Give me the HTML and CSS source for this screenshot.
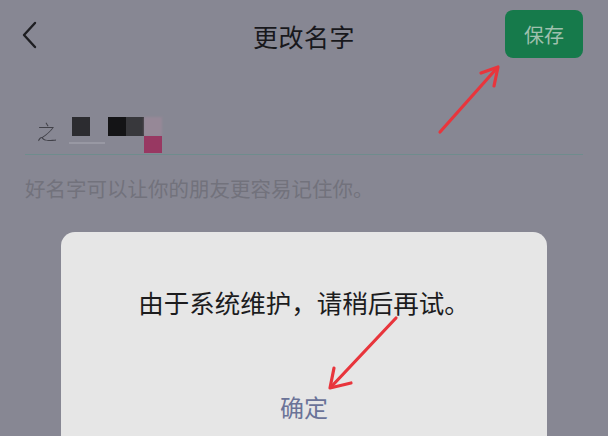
FILE: index.html
```html
<!DOCTYPE html>
<html lang="zh">
<head>
<meta charset="utf-8">
<link rel="stylesheet" href="styles.css">
</head>
<body>
<div class="screen">
  <header class="topbar">
    <div class="back">
      <svg width="18" height="28" viewBox="0 0 18 28"><path d="M15 2 L4 14 L15 26" fill="none" stroke="#1e1e22" stroke-width="2.4" stroke-linecap="round" stroke-linejoin="round"/></svg>
    </div>
    <h1 class="title">更改名字</h1>
    <div class="actions"><button class="save">保存</button></div>
  </header>

  <section class="field">
    <div class="name">
      <span class="glyph">之</span>
      <span class="px px1"></span>
      <span class="px px2"></span>
      <span class="px px3"></span>
      <span class="px px4"></span>
      <span class="px px5"></span>
      <span class="strokes"></span>
    </div>
  </section>
  <p class="hint">好名字可以让你的朋友更容易记住你。</p>

  <div class="dialog">
    <p class="msg">由于系统维护，请稍后再试。</p>
    <div class="ok">确定</div>
  </div>

  <svg class="arrows" width="608" height="436" viewBox="0 0 608 436">
    <g fill="none" stroke="#e8353c" stroke-width="3.2" stroke-linecap="round" stroke-linejoin="round">
      <path d="M440 132 L497 68"/>
      <path d="M481 73 L498 67 L494 86"/>
      <path d="M396 318 L331 387"/>
      <path d="M334 368 L330 388 L351 383"/>
    </g>
  </svg>
</div>
</body>
</html>
```
FILE: styles.css
```css
* { box-sizing: border-box; }
html, body { margin: 0; padding: 0; }
body {
  width: 608px;
  height: 436px;
  overflow: hidden;
  background: #878793;
  font-family: "Noto Sans CJK SC", "Noto Sans", sans-serif;
}
.screen {
  position: relative;
  width: 608px;
  height: 436px;
  display: flex;
  flex-direction: column;
}
.topbar {
  height: 68px;
  display: grid;
  grid-template-columns: 1fr auto 1fr;
  align-items: center;
}
.back {
  padding-left: 20px;
  display: flex;
  align-items: center;
  padding-top: 2px;
}
.title {
  margin: 0;
  font-size: 25px;
  font-weight: 400;
  color: #18181c;
  padding-top: 3px;
  letter-spacing: 0.5px;
}
.actions {
  display: flex;
  justify-content: flex-end;
  padding-right: 25px;
}
.save {
  width: 78px;
  height: 48px;
  border: none;
  border-radius: 8px;
  background: #167a4b;
  color: #9fc0ae;
  font-family: inherit;
  font-size: 20px;
  padding: 0;
}
.field {
  margin: 0 25px;
  height: 87px;
  border-bottom: 1.5px solid #6f8c8d;
  display: flex;
  align-items: flex-end;
}
.name {
  position: relative;
  width: 200px;
  height: 40px;
}
.glyph {
  position: absolute;
  left: 12px;
  top: 8px;
  font-size: 20px;
  font-weight: 300;
  color: #2a2a30;
  line-height: 1;
  opacity: 0.75;
}
.px { position: absolute; width: 18px; height: 19px; top: 3px; }
.px1 { left: 47px; background: #2c2c30; }
.px2 { left: 83px; background: #141416; }
.px3 { left: 101px; background: #38383c; }
.px4 { left: 119px; background: #a48a9c; opacity: 0.55; filter: blur(1px); }
.px5 { left: 119px; top: 22px; height: 17px; background: #983862; }
.strokes {
  position: absolute;
  left: 44px;
  top: 28px;
  width: 36px;
  height: 2px;
  background: #a0a0aa;
  opacity: 0.7;
}
.hint {
  margin: 18px 25px 0;
  font-size: 20.5px;
  color: #72727c;
  line-height: 30px;
}
.dialog {
  margin: 29px 0 0 61px;
  width: 486px;
  flex: 1;
  background: #e6e6e6;
  border-radius: 14px 14px 0 0;
  display: flex;
  flex-direction: column;
  align-items: center;
}
.msg {
  margin: 52px 0 0;
  font-size: 25.5px;
  color: #1c1c1e;
  line-height: 36px;
}
.ok {
  margin-top: 70px;
  font-size: 24px;
  color: #6a7398;
  line-height: 34px;
}
.arrows {
  position: absolute;
  left: 0;
  top: 0;
  pointer-events: none;
}
```
